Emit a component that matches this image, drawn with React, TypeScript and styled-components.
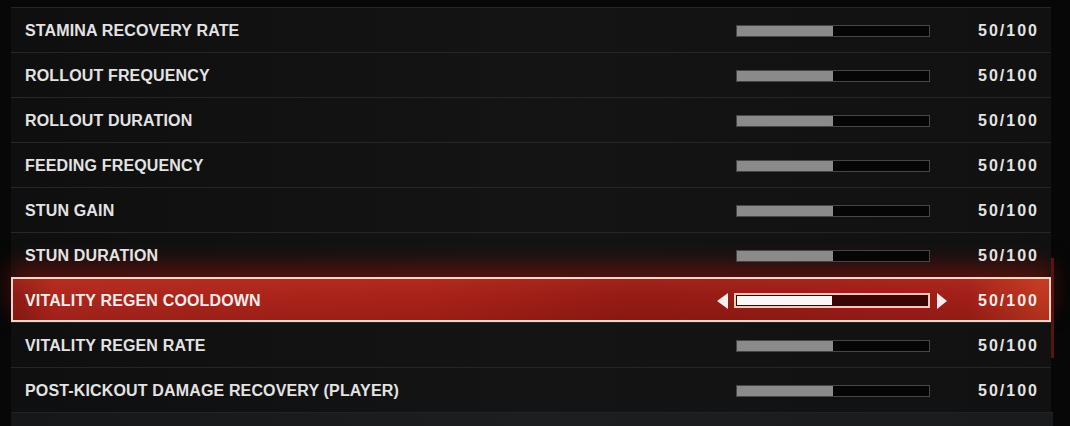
import React from 'react'
import styled, { createGlobalStyle, css } from 'styled-components'

const GlobalStyle = createGlobalStyle`
    html, body {
        margin:0;
        padding:0;
        background:#070707;
    }
    body {
        font-family:"Liberation Sans", Arial, sans-serif;
        overflow:hidden;
    }
`

const Page = styled.div`
    display:flex;
    height:426px;
    padding:7px 0 0 11px;
    box-sizing:border-box;
    background:#070707;
`

const Panel = styled.div`
    width:1040px;
    display:flex;
    flex-direction:column;
`

const List = styled.ul`
    list-style:none;
    margin:0;
    padding:0;
`

const Row = styled.li<{active:boolean}>`
    height:45px;
    box-sizing:border-box;
    padding-top:1px;
    border-top:1px solid #262626;
    display:grid;
    grid-template-columns:1fr auto 90px;
    align-items:center;
    background:linear-gradient(90deg,#0f0f0f,#141414 50%,#111111);
    color:#e3e3e3;
    ${props=>props.active && css`
        border-top-color:#f4d3c9;
        outline:2px solid #f4d3c9;
        outline-offset:-2px;
        background:
            linear-gradient(180deg,rgba(255,120,90,0.10),rgba(0,0,0,0) 40%,rgba(60,0,0,0.15)),
            linear-gradient(90deg,#8c1a14,#ae261d 4%,#a92219 40%,#951b15 60%,#a11f18 92%,#c0371f 99%);
        box-shadow:0 -12px 22px rgba(140,18,10,0.55);
        color:#f6ecea;
    `}
`

const Label = styled.span`
    padding-left:14px;
    font-size:16px;
    font-weight:bold;
    letter-spacing:0.15px;
    white-space:nowrap;
`

const Slider = styled.div<{active:boolean}>`
    display:flex;
    align-items:center;
    margin-right:14px;
    .arrow {
        visibility:${props=>props.active?'visible':'hidden'};
        width:0;
        height:0;
        border-top:8px solid transparent;
        border-bottom:8px solid transparent;
    }
    .left {
        border-right:11px solid #f7eeee;
        margin-right:6px;
    }
    .right {
        border-left:10px solid #f7eeee;
        margin-left:7px;
    }
`

const Track = styled.div<{active:boolean}>`
    width:194px;
    height:12px;
    box-sizing:border-box;
    background:#050505;
    border:1px solid #464646;
    ${props=>props.active && css`
        width:196px;
        height:15px;
        border:2px solid #f1cabe;
        background:#3a0605;
        padding:1px;
    `}
`

const Fill = styled.div<{active:boolean}>`
    height:100%;
    background:${props=>props.active?'#fbf7f6':'#8a8a8a'};
`

const Value = styled.span`
    text-align:right;
    padding-right:14px;
    font-size:16px;
    font-weight:bold;
    letter-spacing:2px;
    margin-right:-2px;
`

const BottomPanel = styled.div`
    flex:1;
    background:linear-gradient(90deg,#161719,#1d1e20 50%,#1a1b1d);
    border-top:1px solid #222326;
    margin-right:-2px;
`

const ScrollTrack = styled.div`
    width:4px;
    padding-top:251px;
`

const Thumb = styled.div`
    width:3px;
    height:100px;
    background:#561512;
`

interface Setting {
    name:string;
    value:number;
    max:number;
}

const settings:Setting[] = [
    { name:'STAMINA RECOVERY RATE', value:50, max:100 },
    { name:'ROLLOUT FREQUENCY', value:50, max:100 },
    { name:'ROLLOUT DURATION', value:50, max:100 },
    { name:'FEEDING FREQUENCY', value:50, max:100 },
    { name:'STUN GAIN', value:50, max:100 },
    { name:'STUN DURATION', value:50, max:100 },
    { name:'VITALITY REGEN COOLDOWN', value:50, max:100 },
    { name:'VITALITY REGEN RATE', value:50, max:100 },
    { name:'POST-KICKOUT DAMAGE RECOVERY (PLAYER)', value:50, max:100 },
]

// currently focused setting
const selected = 6

const App:React.FC = () => {
    return (
        <>
            <GlobalStyle/>
            <Page>
                <Panel>
                    <List>
                        {settings.map((item,i)=>{
                            const active = i===selected
                            return (
                                <Row key={item.name} active={active}>
                                    <Label>{item.name}</Label>
                                    <Slider active={active}>
                                        <i className='arrow left'/>
                                        <Track active={active}>
                                            <Fill active={active} style={{width:`${item.value/item.max*100}%`}}/>
                                        </Track>
                                        <i className='arrow right'/>
                                    </Slider>
                                    <Value>{item.value}/{item.max}</Value>
                                </Row>
                            )
                        })}
                    </List>
                    <BottomPanel/>
                </Panel>
                <ScrollTrack>
                    <Thumb/>
                </ScrollTrack>
            </Page>
        </>
    )
}

export default App
